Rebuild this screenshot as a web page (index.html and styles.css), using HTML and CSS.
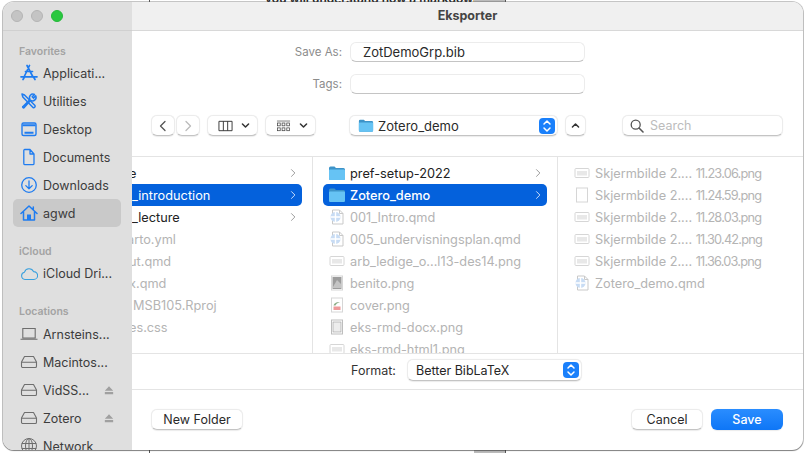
FILE: index.html
```html
<!DOCTYPE html>
<html lang="en">
<head>
  <meta charset="UTF-8" />
  <title>Eksporter</title>
  <link rel="stylesheet" href="styles.css">
</head>
<body>
  <svg class="defs" xmlns="http://www.w3.org/2000/svg">
    <symbol id="i-apps" viewBox="0 0 18 18"><path d="M9.5 1.5 4.5 12M7 1.5l6 11.500M1 12.800h16M3 15.500l1.500-2.500M15 15.500 13.500 13M5.500 7.500l7 .01" fill="none" stroke="currentColor" stroke-width="1.700" stroke-linecap="round"/></symbol>
    <symbol id="i-tools" viewBox="0 0 18 18"><path d="M2 2l2.500 1 10.500 10.500a1.500 1.500 0 0 1-2 2L2.800 5z" fill="none" stroke="currentColor" stroke-width="1.500" stroke-linejoin="round"/><path d="M3 14.500 10 7.500a3.500 3.500 0 0 1 4.500-5l-2.300 2.300 1.200 1.300 2.300-2.300a3.500 3.500 0 0 1-5 4.500L4 15.800a1 1 0 0 1-1.300-1.300z" fill="#dedede" stroke="currentColor" stroke-width="1.500" stroke-linejoin="round"/></symbol>
    <symbol id="i-desktop" viewBox="0 0 18 18"><rect x="2" y="3" width="14" height="12.500" rx="1.500" fill="none" stroke="currentColor" stroke-width="1.400"/><path d="M2.500 5.300h13" stroke="currentColor" stroke-width="2"/><path d="M4.500 12.800h9" stroke="currentColor" stroke-width="2"/></symbol>
    <symbol id="i-doc" viewBox="0 0 18 18"><path d="M4.500 1.500h5.500l4 4.500v9.500a1.200 1.200 0 0 1-1.200 1.200H5a1.200 1.200 0 0 1-1.200-1.200V2.500a1 1 0 0 1 .7-1zM10 1.500V6h4" fill="none" stroke="currentColor" stroke-width="1.300" stroke-linejoin="round"/></symbol>
    <symbol id="i-down" viewBox="0 0 18 18"><circle cx="9" cy="9" r="7.300" fill="none" stroke="currentColor" stroke-width="1.300"/><path d="M9 4.800v8M5.800 9.600 9 12.800l3.200-3.200" fill="none" stroke="currentColor" stroke-width="1.300" stroke-linecap="round" stroke-linejoin="round"/></symbol>
    <symbol id="i-home" viewBox="0 0 18 18"><path d="M1 9.500 9 2l8 7.500M3.500 7.800v8.200h11V7.800M13.300 3v3" fill="none" stroke="currentColor" stroke-width="1.500" stroke-linecap="round" stroke-linejoin="round"/><rect x="7" y="10.500" width="4" height="5.500" fill="currentColor"/></symbol>
    <symbol id="i-cloud" viewBox="0 0 18 18"><path d="M5 14.500a3.700 3.700 0 0 1-.5-7.300 4.800 4.800 0 0 1 9-.6 3.900 3.900 0 0 1 .3 7.900z" fill="none" stroke="currentColor" stroke-width="1.100" stroke-linejoin="round"/></symbol>
    <symbol id="i-laptop" viewBox="0 0 18 18"><path d="M2.800 3.500h12.400v9.500H2.800zM.5 14.300h17" fill="none" stroke="currentColor" stroke-width="1.100"/></symbol>
    <symbol id="i-drive" viewBox="0 0 18 18"><path d="M4.500 3.500h9L16.500 9v4.200a1.300 1.300 0 0 1-1.300 1.300H2.800a1.300 1.300 0 0 1-1.300-1.300V9zM1.500 9.300h15" fill="none" stroke="currentColor" stroke-width="1.100" stroke-linejoin="round"/></symbol>
    <symbol id="i-eject" viewBox="0 0 12 12"><path d="M6 1.500 11 7H1zM1 8.500h10V11H1z" fill="currentColor"/></symbol>
    <symbol id="i-globe" viewBox="0 0 18 18"><g fill="none" stroke="currentColor" stroke-width="1"><circle cx="9" cy="9" r="7.500"/><ellipse cx="9" cy="9" rx="3.500" ry="7.500"/><path d="M9 1.500v15M1.800 6.500h14.400M1.800 11.500h14.400"/></g></symbol>
    <symbol id="i-folder" viewBox="0 0 18 16"><path d="M1 3a1.500 1.500 0 0 1 1.500-1.500h4L8 3h7.500A1.500 1.500 0 0 1 17 4.500v9a1.500 1.500 0 0 1-1.500 1.500h-13A1.500 1.500 0 0 1 1 13.500z" fill="#3d93c8"/><path d="M1 5.500a1 1 0 0 1 1-1h14a1 1 0 0 1 1 1v8a1.500 1.500 0 0 1-1.500 1.500h-13A1.500 1.500 0 0 1 1 13.500z" fill="#66c3f4"/></symbol>
    <symbol id="i-qmd" viewBox="0 0 16 16"><path d="M3.500 1h7L14 4.500V15H3.500zM10.500 1v3.500H14" fill="#fff" stroke="#c9c9c9"/><circle cx="6.500" cy="8" r="5" fill="#c8dcf4"/><path d="M6.500 3v10M1.500 8h10" stroke="#fff" stroke-width="1.400"/></symbol>
    <symbol id="i-wide" viewBox="0 0 16 16"><rect x="1" y="3.500" width="14" height="9" rx="1" fill="#fff" stroke="#d6d6d6"/><rect x="3" y="6" width="10" height="4.500" fill="#e8e8e8"/></symbol>
    <symbol id="i-tall" viewBox="0 0 16 16"><rect x="2.500" y="1" width="11" height="14" fill="#fff" stroke="#d6d6d6"/></symbol>
    <symbol id="i-photo" viewBox="0 0 16 16"><rect x="2.500" y="1" width="11" height="14" fill="#fff" stroke="#d6d6d6"/><rect x="3.500" y="2" width="9" height="12" fill="#9c9c9c"/><path d="M4 12 8 5l4 4v4H4z" fill="#c4c4c4"/></symbol>
    <symbol id="i-cover" viewBox="0 0 16 16"><rect x="2.500" y="1" width="11" height="14" fill="#fff" stroke="#d6d6d6"/><path d="M4.500 8.500C5 6 8 4.500 11 5 8.500 6 7 7 6.500 8.500z" fill="#8fb08a"/><rect x="4.500" y="9.500" width="7" height="3.500" fill="#ee9a9a"/></symbol>
    <symbol id="i-page" viewBox="0 0 16 16"><rect x="2.500" y="1" width="11" height="14" fill="#fff" stroke="#bdbdbd"/><rect x="4" y="3" width="8" height="10" fill="#ededed" stroke="#9a9a9a" stroke-width=".6"/></symbol>
    <symbol id="i-chev" viewBox="0 0 8 12"><path d="M2 1.500 6.500 6 2 10.500" fill="none" stroke="currentColor" stroke-width="1.300" stroke-linecap="round" stroke-linejoin="round"/></symbol>
    <symbol id="i-caret" viewBox="0 0 10 8"><path d="M1.500 2.200 5 5.800l3.500-3.600" fill="none" stroke="currentColor" stroke-width="1.700" stroke-linecap="round" stroke-linejoin="round"/></symbol>
    <symbol id="i-stepper" viewBox="0 0 10 14"><path d="M2 5 5 2l3 3M2 9l3 3 3-3" fill="none" stroke="#fff" stroke-width="1.500" stroke-linecap="round" stroke-linejoin="round"/></symbol>
  </svg>

  <div class="backdrop">
    <div class="backdrop-text">you will understand how a markdown</div>
    <div class="backdrop-line backdrop-line-a"></div>
    <div class="backdrop-line backdrop-line-b"></div>
    <div class="backdrop-block"></div>
  </div>

  <div class="window">
    <aside class="sidebar">
      <div class="lights">
        <span class="light"></span>
        <span class="light"></span>
        <span class="light light-green"></span>
      </div>
      <div class="side-list">
        <div class="side-title">Favorites</div>
        <div class="side-row"><svg class="side-icon"><use href="#i-apps"/></svg><span>Applicati...</span></div>
        <div class="side-row"><svg class="side-icon"><use href="#i-tools"/></svg><span>Utilities</span></div>
        <div class="side-row"><svg class="side-icon"><use href="#i-desktop"/></svg><span>Desktop</span></div>
        <div class="side-row"><svg class="side-icon"><use href="#i-doc"/></svg><span>Documents</span></div>
        <div class="side-row"><svg class="side-icon"><use href="#i-down"/></svg><span>Downloads</span></div>
        <div class="side-row side-selected"><svg class="side-icon"><use href="#i-home"/></svg><span>agwd</span></div>

        <div class="side-title side-gap">iCloud</div>
        <div class="side-row"><svg class="side-icon side-icon-cloud"><use href="#i-cloud"/></svg><span>iCloud Dri...</span></div>

        <div class="side-title side-gap">Locations</div>
        <div class="side-row"><svg class="side-icon side-icon-grey"><use href="#i-laptop"/></svg><span>Arnsteins...</span></div>
        <div class="side-row"><svg class="side-icon side-icon-grey"><use href="#i-drive"/></svg><span>Macintos...</span></div>
        <div class="side-row"><svg class="side-icon side-icon-grey"><use href="#i-drive"/></svg><span>VidSS...</span><svg class="eject"><use href="#i-eject"/></svg></div>
        <div class="side-row"><svg class="side-icon side-icon-grey"><use href="#i-drive"/></svg><span>Zotero</span><svg class="eject"><use href="#i-eject"/></svg></div>
        <div class="side-row"><svg class="side-icon side-icon-grey"><use href="#i-globe"/></svg><span>Network</span></div>
      </div>
    </aside>

    <main class="main">
      <header class="titlebar">Eksporter</header>

      <section class="form">
        <div class="form-row">
          <label class="form-label">Save As:</label>
          <div class="field field-name">ZotDemoGrp.bib</div>
        </div>
        <div class="form-row">
          <label class="form-label">Tags:</label>
          <div class="field"></div>
        </div>
      </section>

      <section class="toolbar">
        <div class="nav-pair">
          <div class="btn btn-nav"><svg class="nav-chev nav-back"><use href="#i-chev"/></svg></div>
          <div class="btn btn-nav"><svg class="nav-chev nav-off"><use href="#i-chev"/></svg></div>
        </div>
        <div class="btn btn-view">
          <svg class="view-icon" viewBox="0 0 16 12"><path d="M1 1h14v10H1zM5.700 1v10M10.300 1v10" fill="none" stroke="#333" stroke-width="1"/></svg>
          <svg class="caret"><use href="#i-caret"/></svg>
        </div>
        <div class="btn btn-view">
          <svg class="view-icon" viewBox="0 0 16 12"><path d="M1 .7h14" stroke="#555" stroke-width=".8"/><g fill="none" stroke="#444" stroke-width=".8"><rect x="1.500" y="2.800" width="3" height="3"/><rect x="6.500" y="2.800" width="3" height="3"/><rect x="11.500" y="2.800" width="3" height="3"/><rect x="1.500" y="8" width="3" height="3"/><rect x="6.500" y="8" width="3" height="3"/><rect x="11.500" y="8" width="3" height="3"/></g></svg>
          <svg class="caret"><use href="#i-caret"/></svg>
        </div>
        <div class="btn btn-path">
          <svg class="path-folder"><use href="#i-folder"/></svg>
          <span class="path-name">Zotero_demo</span>
          <svg class="stepper" viewBox="0 0 16 16"><use href="#i-stepper" x="3" y="1" width="10" height="14"/></svg>
        </div>
        <div class="btn btn-up"><svg class="caret caret-up"><use href="#i-caret"/></svg></div>
        <div class="btn search">
          <svg class="search-icon" viewBox="0 0 14 14"><circle cx="5.700" cy="5.700" r="4.500" fill="none" stroke="#555" stroke-width="1.300"/><path d="M9 9l4 4" stroke="#555" stroke-width="1.600" stroke-linecap="round"/></svg>
          <span>Search</span>
        </div>
      </section>

      <section class="browser">
        <div class="col col-first">
          <div class="row"><span class="row-name cut-a">e</span><svg class="chev"><use href="#i-chev"/></svg></div>
          <div class="row row-selected"><span class="row-name">_introduction</span><svg class="chev"><use href="#i-chev"/></svg></div>
          <div class="row"><span class="row-name">_lecture</span><svg class="chev"><use href="#i-chev"/></svg></div>
          <div class="row row-off"><span class="row-name cut-b">arto.yml</span></div>
          <div class="row row-off"><span class="row-name cut-a">ut.qmd</span></div>
          <div class="row row-off"><span class="row-name cut-a">x.qmd</span></div>
          <div class="row row-off"><span class="row-name indent">MSB105.Rproj</span></div>
          <div class="row row-off"><span class="row-name cut-a">es.css</span></div>
        </div>
        <div class="col col-second">
          <div class="row"><svg class="file-icon folder-icon"><use href="#i-folder"/></svg><span class="row-name">pref-setup-2022</span><svg class="chev"><use href="#i-chev"/></svg></div>
          <div class="row row-selected"><svg class="file-icon folder-icon"><use href="#i-folder"/></svg><span class="row-name">Zotero_demo</span><svg class="chev"><use href="#i-chev"/></svg></div>
          <div class="row row-off"><svg class="file-icon"><use href="#i-qmd"/></svg><span class="row-name">001_Intro.qmd</span></div>
          <div class="row row-off"><svg class="file-icon"><use href="#i-qmd"/></svg><span class="row-name">005_undervisningsplan.qmd</span></div>
          <div class="row row-off"><svg class="file-icon"><use href="#i-wide"/></svg><span class="row-name">arb_ledige_o...l13-des14.png</span></div>
          <div class="row row-off"><svg class="file-icon"><use href="#i-photo"/></svg><span class="row-name">benito.png</span></div>
          <div class="row row-off"><svg class="file-icon"><use href="#i-cover"/></svg><span class="row-name">cover.png</span></div>
          <div class="row row-off"><svg class="file-icon"><use href="#i-page"/></svg><span class="row-name">eks-rmd-docx.png</span></div>
          <div class="row row-off"><svg class="file-icon"><use href="#i-wide"/></svg><span class="row-name">eks-rmd-html1.png</span></div>
        </div>
        <div class="col col-third">
          <div class="row row-off"><svg class="file-icon"><use href="#i-wide"/></svg><span class="row-name">Skjermbilde 2.... <span class="stamp">11.23.06.png</span></span></div>
          <div class="row row-off"><svg class="file-icon"><use href="#i-tall"/></svg><span class="row-name">Skjermbilde 2.... <span class="stamp">11.24.59.png</span></span></div>
          <div class="row row-off"><svg class="file-icon"><use href="#i-wide"/></svg><span class="row-name">Skjermbilde 2.... <span class="stamp">11.28.03.png</span></span></div>
          <div class="row row-off"><svg class="file-icon"><use href="#i-wide"/></svg><span class="row-name">Skjermbilde 2.... <span class="stamp">11.30.42.png</span></span></div>
          <div class="row row-off"><svg class="file-icon"><use href="#i-wide"/></svg><span class="row-name">Skjermbilde 2.... <span class="stamp">11.36.03.png</span></span></div>
          <div class="row row-off"><svg class="file-icon"><use href="#i-qmd"/></svg><span class="row-name">Zotero_demo.qmd</span></div>
        </div>
      </section>

      <section class="format">
        <label class="format-label">Format:</label>
        <div class="btn btn-format">
          <span>Better BibLaTeX</span>
          <svg class="stepper" viewBox="0 0 16 16"><use href="#i-stepper" x="3" y="1" width="10" height="14"/></svg>
        </div>
      </section>

      <footer class="footer">
        <div class="btn btn-text btn-newfolder">New Folder</div>
        <div class="footer-right">
          <div class="btn btn-text btn-action">Cancel</div>
          <div class="btn btn-text btn-action btn-save">Save</div>
        </div>
      </footer>
    </main>
  </div>
</body>
</html>
```

FILE: styles.css
```css
* {
  box-sizing: border-box;
}
html, body {
  height: 100%;
}
body {
  margin: 0;
  overflow: hidden;
  background-color: #fff;
  font-family: Inter, "Liberation Sans", sans-serif;
  font-size: 12.5px;
  color: #262626;
}
svg {
  display: block;
  flex: none;
}
.defs {
  width: 0;
  height: 0;
  position: absolute;
}

/* page behind the dialog */
.backdrop {
  position: absolute;
  inset: 0;
}
.backdrop-text {
  position: absolute;
  left: 265px;
  top: -9px;
  width: 200px;
  font-size: 12px;
  font-weight: 600;
  color: #222;
  white-space: nowrap;
}
.backdrop-line {
  position: absolute;
  top: 0;
  bottom: 0;
  width: 1px;
  background-color: #555;
}
.backdrop-line-a {
  left: 149px;
}
.backdrop-line-b {
  left: 505px;
}
.backdrop-block {
  position: absolute;
  left: 474px;
  top: 0;
  bottom: 0;
  width: 31px;
  background-color: #bbb;
}

.window {
  position: absolute;
  left: 3px;
  top: 2px;
  width: 800px;
  height: 448px;
  display: flex;
  overflow: hidden;
  background-color: #fff;
  border-radius: 11px;
  box-shadow: 0 0 0 1px rgba(90, 90, 90, .35), 0 1px 1px rgba(0, 0, 0, .4);
}

/* sidebar */
.sidebar {
  width: 129px;
  flex: none;
  background-color: #dfdfdf;
}
.lights {
  height: 29px;
  display: flex;
  align-items: center;
  gap: 8px;
  padding-left: 8px;
  border-bottom: 1px solid #d0d0d0;
}
.light {
  width: 12px;
  height: 12px;
  border-radius: 50%;
  background-color: #c4c4c4;
  border: 1px solid #b4b4b4;
}
.light-green {
  background-color: #2ac840;
  border-color: #25b83a;
}
.side-list {
  padding: 11px 0 0 10px;
}
.side-title {
  height: 17px;
  padding-left: 6px;
  line-height: 19px;
  font-size: 10.500px;
  font-weight: 600;
  color: #a3a3a3;
}
.side-gap {
  margin-top: 15.500px;
  line-height: 17px;
}
.side-row {
  width: 108px;
  height: 28px;
  display: flex;
  align-items: center;
  padding-left: 10px;
  border-radius: 5px;
  color: #3c3c3c;
}
.side-selected {
  background-color: #c9c9c9;
}
.side-icon {
  width: 18px;
  height: 18px;
  margin-left: -3px;
  margin-right: 5px;
  color: #1f7cf0;
}
.side-icon-cloud {
  color: #3aa0de;
}
.side-icon-grey {
  color: #6e6e6e;
}
.eject {
  width: 10px;
  height: 10px;
  margin-left: auto;
  margin-right: 7px;
  color: #a0a0a0;
}

/* main */
.main {
  flex: 1;
  min-width: 0;
  display: flex;
  flex-direction: column;
}
.titlebar {
  height: 29px;
  flex: none;
  line-height: 28px;
  text-align: center;
  font-weight: 700;
  font-size: 12.500px;
  color: #444;
  background-color: #f0f0f0;
  border-bottom: 1px solid #d8d8d8;
}
.form {
  padding-top: 11px;
  display: flex;
  flex-direction: column;
  gap: 12px;
}
.form-row {
  display: flex;
  align-items: center;
}
.form-label {
  width: 210px;
  text-align: right;
  margin-right: 8px;
  font-size: 11.500px;
  color: #8c8c8c;
}
.field {
  width: 235px;
  height: 20px;
  padding-left: 12px;
  line-height: 19px;
  font-size: 13px;
  color: #2a2a2a;
  background-color: #fff;
  border-radius: 6px;
  border: 1px solid #ececec;
  border-bottom-color: #c4c4c4;
}
.btn {
  display: flex;
  align-items: center;
  height: 21px;
  background-color: #fff;
  border-radius: 6px;
  border: 1px solid #ececec;
  border-bottom-color: #c4c4c4;
  box-shadow: 0 .5px 1px rgba(0, 0, 0, .08);
}
.toolbar {
  display: flex;
  align-items: center;
  margin-top: 21px;
  padding-left: 19px;
}
.nav-pair {
  display: flex;
  gap: 1px;
}
.btn-nav {
  width: 24px;
  justify-content: center;
}
.nav-chev {
  width: 8px;
  height: 12px;
  color: #555;
}
.nav-back {
  transform: scaleX(-1);
}
.nav-off {
  color: #bbb;
}
.btn-view {
  width: 51px;
  margin-left: 7px;
  padding: 0 7px 0 10px;
  justify-content: space-between;
}
.view-icon {
  width: 15px;
  height: 12px;
}
.caret {
  width: 9px;
  height: 7px;
  color: #333;
}
.btn-path {
  width: 209px;
  margin-left: 33px;
  padding: 0 2px 0 8px;
}
.path-folder {
  width: 16px;
  height: 15px;
  margin-right: 4px;
}
.path-name {
  font-size: 13px;
  color: #2a2a2a;
}
.stepper {
  width: 16px;
  height: 16px;
  margin-left: auto;
  background-color: #1a80fb;
  border-radius: 4px;
}
.btn-up {
  width: 21px;
  margin-left: 7px;
  justify-content: center;
}
.caret-up {
  transform: scaleY(-1);
}
.search {
  width: 161px;
  margin-left: 36px;
  padding-left: 7px;
  color: #bcbcbc;
  font-size: 12.500px;
}
.search-icon {
  width: 14px;
  height: 14px;
  margin-right: 6px;
}

/* column browser */
.browser {
  height: 198px;
  margin-top: 20px;
  flex: none;
  display: flex;
  border-top: 1px solid #e4e4e4;
  border-bottom: 1px solid #e4e4e4;
}
.col {
  height: 100%;
  padding-top: 5px;
  overflow: hidden;
}
.col-first {
  width: 181px;
  padding-right: 10px;
  border-right: 1px solid #e4e4e4;
}
.col-second {
  width: 245px;
  padding: 5px 10px 0;
  border-right: 1px solid #e4e4e4;
}
.col-third {
  flex: 1;
  padding-left: 16px;
}
.row {
  height: 22px;
  display: flex;
  align-items: center;
  font-size: 12.750px;
  color: #222;
  white-space: nowrap;
}
.row-off {
  color: #b4b4b4;
}
.row-selected {
  color: #fff;
  font-weight: 500;
  background-color: #0461dc;
  border-radius: 5px;
}
.col-first .row-selected {
  font-weight: 400;
  border-radius: 0 5px 5px 0;
}
.col-second .row {
  padding-left: 6px;
}
.row-name {
  flex: 1;
}
.cut-a {
  margin-left: -3px;
}
.cut-b {
  margin-left: -5px;
}
.indent {
  margin-left: 1px;
}
.stamp {
  letter-spacing: -.8px;
}
.file-icon {
  width: 16px;
  height: 16px;
  margin-right: 5px;
}
.folder-icon {
  width: 18px;
  height: 16px;
  margin-left: -1px;
  margin-right: 4px;
}
.chev {
  width: 6px;
  height: 10px;
  margin-right: 6px;
  color: #9a9a9a;
}
.row-selected .chev {
  color: #cfe0fa;
}

/* bottom */
.format {
  height: 36px;
  flex: none;
  display: flex;
  border-bottom: 1px solid #e4e4e4;
  padding: 5px 0 0 219px;
}
.format-label {
  padding-top: 4px;
  margin-right: 11px;
  color: #333;
}
.btn-format {
  width: 175px;
  height: 22px;
  padding: 0 2px 0 8px;
}
.footer {
  flex: 1;
  display: flex;
  justify-content: space-between;
  align-items: flex-start;
  padding: 19px 20px 0 19px;
}
.btn-text {
  height: 21px;
  justify-content: center;
  color: #2a2a2a;
}
.btn-newfolder {
  width: 92px;
}
.footer-right {
  display: flex;
  gap: 8px;
}
.btn-action {
  width: 72px;
}
.btn-save {
  color: #fff;
  font-weight: 500;
  border: 0;
  background: linear-gradient(#2a8dff, #0e76f6);
}
```
